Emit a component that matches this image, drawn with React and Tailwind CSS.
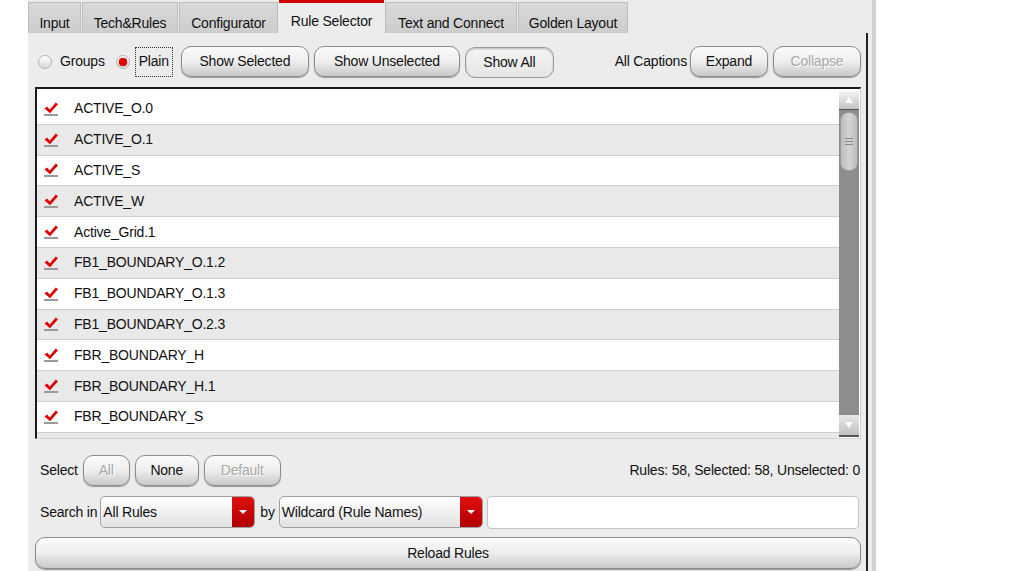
import React from "react";

const rules = [
  "ACTIVE_O.0",
  "ACTIVE_O.1",
  "ACTIVE_S",
  "ACTIVE_W",
  "Active_Grid.1",
  "FB1_BOUNDARY_O.1.2",
  "FB1_BOUNDARY_O.1.3",
  "FB1_BOUNDARY_O.2.3",
  "FBR_BOUNDARY_H",
  "FBR_BOUNDARY_H.1",
  "FBR_BOUNDARY_S",
  "",
];

const tabs = [
  { label: "Input", w: "w-[53px]" },
  { label: "Tech&Rules", w: "w-[96px]" },
  { label: "Configurator", w: "w-[99px]" },
  { label: "Rule Selector", w: "w-[105px]", active: true },
  { label: "Text and Connect", w: "w-[132px]" },
  { label: "Golden Layout", w: "w-[110px]" },
];

function Check() {
  return (
    <svg width="16" height="16" viewBox="0 0 16 16" className="shrink-0">
      <rect x="1" y="13" width="14" height="2" fill="#9a9a9a" />
      <path d="M1.5 7.5 L4 5.5 L6.8 8.6 L12.8 1.5 L15 3.3 L7 12.3 Z" fill="#e00000" />
    </svg>
  );
}

function Btn({ children, className = "", disabled = false, pressed = false }) {
  return (
    <div
      className={
        "flex items-center justify-center h-[31px] rounded-[10px] border shrink-0 " +
        (pressed
          ? "border-[#9a9a9a] bg-linear-to-b from-[#f4f4f4] to-[#e6e6e6] shadow-[inset_0_1px_2px_rgba(0,0,0,0.25)] "
          : "border-[#8c8c8c] bg-linear-to-b from-[#fbfbfb] via-[#eeeeee] to-[#c9c9c9] shadow-[0_1px_1px_rgba(0,0,0,0.35)] ") +
        (disabled ? "text-[#a8a8a8] [text-shadow:1px_1px_0_#fff] " : "text-[#111] ") +
        className
      }
    >
      {children}
    </div>
  );
}

function Radio({ on }) {
  return (
    <div className="w-[14px] h-[14px] rounded-full border border-[#b5b5b5] bg-linear-to-b from-[#ffffff] to-[#d8d8d8] flex items-center justify-center shrink-0">
      {on && <div className="w-[8px] h-[8px] rounded-full bg-[#e00000] shadow-[0_0_1px_#800]" />}
    </div>
  );
}

function Combo({ label, className }) {
  return (
    <div
      className={
        "flex h-[32px] rounded-[5px] border border-[#a0a0a0] bg-linear-to-b from-[#ffffff] to-[#e2e2e2] overflow-hidden shrink-0 " +
        className
      }
    >
      <div className="flex-1 flex items-center pl-[2px] text-[#111]">{label}</div>
      <div className="w-[22px] bg-linear-to-b from-[#e01010] to-[#b00000] flex items-center justify-center rounded-r-[4px]">
        <svg width="10" height="8" viewBox="0 0 10 8">
          <path d="M1 2 L9 2 L5 6 Z" fill="#ffffff" />
        </svg>
      </div>
    </div>
  );
}

export default function App() {
  return (
    <div className="w-[1013px] h-[571px] bg-white overflow-hidden font-['Liberation_Sans',Arial,sans-serif] text-[14px] text-[#111] tracking-[-0.2px]">
      <div className="ml-[28px] w-[848px] h-[571px] flex flex-col bg-[#ececec] border-r-[4px] border-[#d2d2d2]">
        {/* Tab bar */}
        <div className="h-[33px] flex items-end shrink-0">
          {tabs.map((t, i) => (
            <div
              key={t.label}
              className={
                t.w +
                " h-[31px] flex items-center justify-center shrink-0 " +
                (i > 0 ? "ml-[1px] " : "") +
                (t.active
                  ? "bg-[#ececec] h-[33px] border-t-[3px] border-[#d40000] pt-[6px]"
                  : "bg-linear-to-b from-[#d9d9d9] to-[#cdcdcd] border border-b-0 border-[#bdbdbd] pt-[10px]")
              }
            >
              {t.label}
            </div>
          ))}
        </div>

        {/* Content frame */}
        <div className="flex-1 flex flex-col border-r-[2px] border-[#222] mr-[4px] pl-[7px] pr-[5px]">
          {/* Toolbar */}
          <div className="flex items-center h-[31px] mt-[13px] shrink-0">
            <div className="ml-[3px]">
              <Radio />
            </div>
            <span className="ml-[8px]">Groups</span>
            <div className="ml-[11px]">
              <Radio on />
            </div>
            <span className="ml-[5px] px-[3px] h-[30px] flex items-center border border-dotted border-[#333]">Plain</span>
            <Btn className="ml-[8px] w-[128px]">Show Selected</Btn>
            <Btn className="ml-[5px] w-[146px]">Show Unselected</Btn>
            <Btn className="ml-[5px] w-[89px] mt-[2px]" pressed>
              Show All
            </Btn>
            <div className="flex-1" />
            <span className="mr-[3px]">All Captions</span>
            <Btn className="w-[78px]">Expand</Btn>
            <Btn className="ml-[5px] w-[88px]" disabled>
              Collapse
            </Btn>
          </div>

          {/* List */}
          <div className="mt-[10px] h-[352px] flex border-t-[2px] border-l-[2px] border-t-[#1a1a1a] border-l-[#1a1a1a] border-r border-b border-r-[#cfcfcf] border-b-[#cfcfcf] bg-white shrink-0">
            <div className="flex-1 overflow-hidden pt-[5px]">
              {rules.map((r, i) => (
                <div
                  key={i}
                  className={
                    "h-[30.8px] flex items-center pl-[6px] border-b border-[#cfcfcf] " +
                    (i % 2 === 0 ? "bg-white" : "bg-[#e9e9e9]")
                  }
                >
                  <Check />
                  {r && <span className="ml-[15px]">{r}</span>}
                </div>
              ))}
            </div>
            {/* Scrollbar */}
            <div className="w-[20px] mt-[2px] mb-[1px] mr-[1px] flex flex-col bg-[#8d8d8d]">
              <div className="h-[19px] bg-linear-to-b from-[#f4f4f4] to-[#c4c4c4] border-b border-[#555] flex items-center justify-center">
                <svg width="10" height="8" viewBox="0 0 10 8">
                  <path d="M5 1 L9 7 L1 7 Z" fill="#ffffff" />
                </svg>
              </div>
              <div className="mx-[1px] mt-[2px] h-[59px] rounded-[8px] bg-linear-to-r from-[#bcbcbc] via-[#d4d4d4] to-[#bcbcbc] border border-[#9a9a9a] flex flex-col items-center justify-center gap-[2px]">
                <div className="w-[8px] h-[1px] bg-[#888]" />
                <div className="w-[8px] h-[1px] bg-[#888]" />
                <div className="w-[8px] h-[1px] bg-[#888]" />
              </div>
              <div className="flex-1" />
              <div className="h-[22px] bg-linear-to-b from-[#e8e8e8] to-[#c0c0c0] border-b-2 border-[#555] flex items-center justify-center">
                <svg width="10" height="8" viewBox="0 0 10 8">
                  <path d="M1 1 L9 1 L5 7 Z" fill="#ffffff" />
                </svg>
              </div>
            </div>
          </div>

          {/* Select row */}
          <div className="flex items-center h-[31px] mt-[16px] shrink-0">
            <span className="ml-[5px]">Select</span>
            <Btn className="ml-[5px] w-[47px]" disabled>
              All
            </Btn>
            <Btn className="ml-[5px] w-[64px]">None</Btn>
            <Btn className="ml-[5px] w-[77px]" disabled>
              Default
            </Btn>
            <div className="flex-1" />
            <span className="mr-[1px]">Rules: 58, Selected: 58, Unselected: 0</span>
          </div>

          {/* Search row */}
          <div className="flex items-center h-[34px] mt-[9px] shrink-0">
            <span className="ml-[5px]">Search in</span>
            <Combo label="All Rules" className="ml-[3px] w-[155px]" />
            <span className="ml-[5px]">by</span>
            <Combo label="Wildcard (Rule Names)" className="ml-[4px] w-[204px]" />
            <div className="ml-[4px] flex-1 h-[33px] mr-[2px] rounded-[4px] border border-[#c4c4c4] bg-white" />
          </div>

          {/* Reload */}
          <Btn className="mt-[8px] w-full h-[32px]">Reload Rules</Btn>
        </div>
      </div>
    </div>
  );
}
